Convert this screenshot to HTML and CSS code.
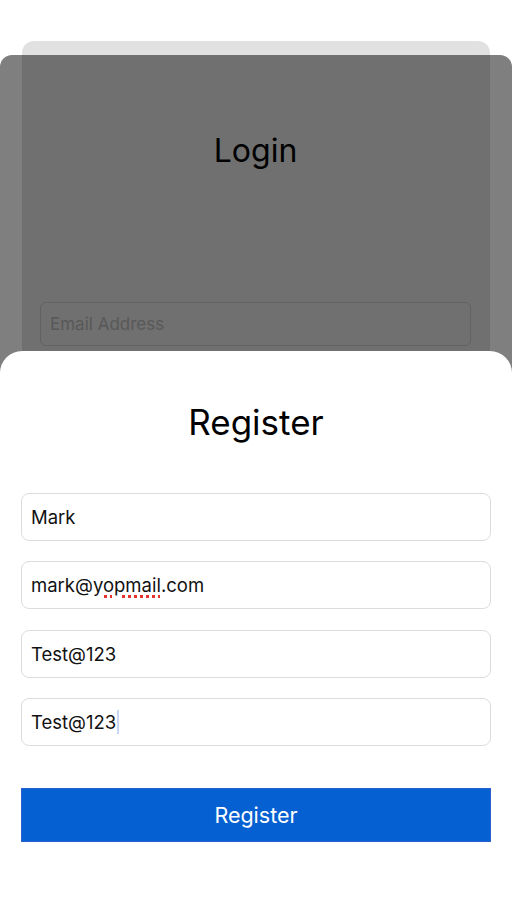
FILE: index.html
```html
<!DOCTYPE html>
<html>
<head>
<meta charset="utf-8">
<link rel="stylesheet" href="styles.css">
</head>
<body>
<div class="stage">
  <div class="login-card">
    <h2 class="login-title">Login</h2>
    <div class="login-input">Email Address</div>
  </div>
  <div class="dim"></div>
  <div class="sheet">
    <h1 class="sheet-title">Register</h1>
    <div class="fields">
      <div class="field">Mark</div>
      <div class="field">mark@<span class="misspelled">yopmail</span>.com</div>
      <div class="field">Test@123</div>
      <div class="field">Test@123<span class="caret"></span></div>
    </div>
    <button class="btn">Register</button>
  </div>
</div>
</body>
</html>
```
FILE: styles.css
```css
* { box-sizing: border-box; }
html, body { margin: 0; padding: 0; background: #fff; }
body { font-family: Inter, "Noto Sans", sans-serif; }
.stage {
  position: relative;
  width: 512px;
  height: 911px;
  overflow: hidden;
  background: #fff;
}
.login-card {
  margin: 41px 22px 0;
  height: 870px;
  background: #e1e1e1;
  border-radius: 12px 12px 0 0;
  padding: 90px 19px 0 18px;
  display: flex;
  flex-direction: column;
}
.login-title {
  margin: 0;
  text-align: center;
  font-weight: 400;
  font-size: 32px;
  line-height: 40px;
  color: #000;
}
.login-input {
  margin-top: 131px;
  height: 44px;
  border: 1px solid #c4c4c4;
  border-radius: 6px;
  padding: 0 9px;
  display: flex;
  align-items: center;
  font-size: 17px;
  color: #b0b0b0;
}
.dim {
  position: absolute;
  top: 55px; left: 0; right: 0; bottom: 0;
  background: rgba(0,0,0,0.5);
  border-radius: 12px 12px 0 0;
}
.sheet {
  position: absolute;
  top: 351px; left: 0; right: 0; bottom: 0;
  background: #fff;
  border-radius: 22px 22px 0 0;
  padding: 49px 21px 0;
  display: flex;
  flex-direction: column;
}
.sheet-title {
  margin: 0;
  text-align: center;
  font-weight: 400;
  font-size: 35px;
  line-height: 44px;
  color: #000;
}
.fields {
  margin-top: 49px;
  display: flex;
  flex-direction: column;
  gap: 20.3px;
}
.field {
  height: 48px;
  border: 1px solid #dcdcdc;
  border-radius: 8px;
  padding: 0 9px;
  display: flex;
  align-items: center;
  font-size: 18.5px;
  color: #111;
}
.misspelled {
  text-decoration: underline dotted #e8322a;
  text-decoration-thickness: 3px;
  text-underline-offset: 3px;
}
.caret {
  display: inline-block;
  width: 2px;
  height: 24px;
  margin-left: 1px;
  background: #c9d6f5;
}
.btn {
  margin-top: 42px;
  height: 54px;
  width: 100%;
  background: #0561d2;
  border: 1px solid #2a5fcf;
  color: #fff;
  font-family: Inter, "Noto Sans", sans-serif;
  font-size: 21.5px;
  font-weight: 400;
  border-radius: 0;
  padding: 0;
}
```
